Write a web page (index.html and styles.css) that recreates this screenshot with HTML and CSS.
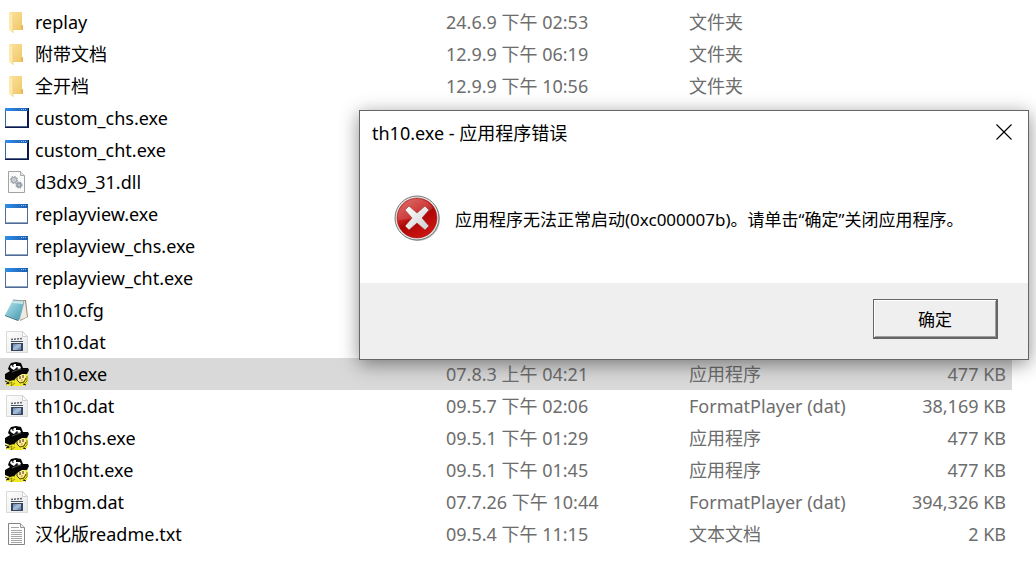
FILE: index.html
```
<!DOCTYPE html>
<html lang="zh-CN">
<head>
    <meta charset="UTF-8">
    <meta name="viewport" content="width=device-width, initial-scale=1.0">
    <title>th10</title>
    <link rel="stylesheet" href="styles.css">
</head>
<body>
    <svg class="sprite" aria-hidden="true">
        <defs>
            <linearGradient id="folderBack" x1="0" y1="0" x2="1" y2="1">
                <stop offset="0" stop-color="#fbe29c"/>
                <stop offset="1" stop-color="#efc566"/>
            </linearGradient>
            <linearGradient id="windowBar" x1="0" y1="0" x2="1" y2="0">
                <stop offset="0" stop-color="#2f8fe8"/>
                <stop offset="1" stop-color="#1b5cae"/>
            </linearGradient>
            <linearGradient id="notebook" x1="0" y1="0" x2="1" y2="1">
                <stop offset="0" stop-color="#b9e6ec"/>
                <stop offset="0.5" stop-color="#7cc0d0"/>
                <stop offset="1" stop-color="#3f93ad"/>
            </linearGradient>
            <linearGradient id="screen" x1="0" y1="0" x2="1" y2="1">
                <stop offset="0" stop-color="#6484ad"/>
                <stop offset="0.5" stop-color="#a9c3de"/>
                <stop offset="1" stop-color="#54749c"/>
            </linearGradient>
            <linearGradient id="paper" x1="0" y1="0" x2="1" y2="1">
                <stop offset="0" stop-color="#fdfdfd"/>
                <stop offset="1" stop-color="#e9e9ea"/>
            </linearGradient>
            <linearGradient id="errorRed" x1="0" y1="0" x2="0.6" y2="1">
                <stop offset="0" stop-color="#d8605c"/>
                <stop offset="0.45" stop-color="#c8201f"/>
                <stop offset="0.6" stop-color="#ad0505"/>
                <stop offset="1" stop-color="#cc1512"/>
            </linearGradient>
            <linearGradient id="errorCross" x1="0" y1="0" x2="1" y2="1">
                <stop offset="0" stop-color="#ffffff"/>
                <stop offset="1" stop-color="#cfcfcf"/>
            </linearGradient>
        </defs>
        <symbol id="icon-folder" viewBox="0 0 24 24">
            <path d="M5 2h12v13l1 1v4H6z" fill="url(#folderBack)"/>
            <path d="M16 15h2v5h-2z" fill="#e5b95c"/>
            <path d="M4 2l4 3v18l-4-3z" fill="#fde9ab"/>
            <path d="M8 5v18" stroke="#edca77" stroke-width="0.6"/>
        </symbol>
        <symbol id="icon-window-dark" viewBox="0 0 24 24">
            <path d="M0 2h24v20H0z" fill="#10184a"/>
            <path d="M0 2h1v19H0z" fill="#3c6494"/>
            <path d="M0 2h23v3H0z" fill="url(#windowBar)"/>
            <path d="M1 5h21v15H1z" fill="#fff"/>
            <path d="M16 3h1v1h-1zM18 3h1v1h-1zM20 3h1v1h-1z" fill="#8cc4f4"/>
            <path d="M1 20h21v1H1z" fill="#496596"/>
        </symbol>
        <symbol id="icon-window" viewBox="0 0 24 24">
            <path d="M0 2h23v20H0z" fill="#536b94"/>
            <path d="M0 2h23v4H0z" fill="url(#windowBar)"/>
            <path d="M1 6h21v14H1z" fill="#fff"/>
            <path d="M16 3h1v1h-1zM18 3h1v1h-1zM20 3h1v1h-1z" fill="#8cc4f4"/>
            <path d="M1 20h21v1H1z" fill="#8ea6c4"/>
        </symbol>
        <symbol id="icon-dll" viewBox="0 0 24 24">
            <path d="M3.500 1.500h12l4 4v17h-16z" fill="#fafafa" stroke="#a2a2a2"/>
            <path d="M15.500 1.500v4h4" fill="#e8e8e8" stroke="#a8a8a8"/>
            <circle cx="9" cy="10" r="2.500" fill="#eef0f3" stroke="#a4a9b0" stroke-width="1.500"/>
            <circle cx="9" cy="10" r="3.500" fill="none" stroke="#a4a9b0" stroke-width="1.200" stroke-dasharray="1.500 1.200"/>
            <circle cx="9" cy="10" r="0.800" fill="#8b929b"/>
            <circle cx="14" cy="15" r="2" fill="#eef0f3" stroke="#949aa3" stroke-width="1.500"/>
            <circle cx="14" cy="15" r="3" fill="none" stroke="#949aa3" stroke-width="1.200" stroke-dasharray="1.400 1"/>
            <circle cx="14" cy="15" r="0.800" fill="#7b828b"/>
        </symbol>
        <symbol id="icon-cfg" viewBox="0 0 24 24">
            <path d="M18 2l3 0 2 17-8 4z" fill="#9c8a72"/>
            <path d="M18 3h2l2 16-7 3z" fill="#eceae4"/>
            <path d="M8 2l11 1-5 19-14-5z" fill="url(#notebook)"/>
            <path d="M8 2l11 1-1 3-11-1z" fill="#c7e6e9"/>
            <path d="M0 17l14 5-1 1-13-5z" fill="#3b7485"/>
            <path d="M8 2l11 1" stroke="#8a9c9e"/>
            <path d="M14 22l5-18" stroke="#5ba0b2" stroke-width="0.700"/>
        </symbol>
        <symbol id="icon-dat" viewBox="0 0 24 24">
            <path d="M1.500 1.500h16l5 5v16h-21z" fill="url(#paper)" stroke="#dadada"/>
            <path d="M17.500 1.500v5h5z" fill="#fff" stroke="#cfcfcf"/>
            <path d="M6 9.500l12-1" stroke="#5d6670" stroke-width="1.500" stroke-dasharray="2 1"/>
            <path d="M6 11h12v1H6z" fill="#4b535e"/>
            <path d="M6 13h12v8H6z" fill="#39475c"/>
            <path d="M8 14h8v6H8z" fill="url(#screen)"/>
        </symbol>
        <symbol id="icon-marisa" viewBox="0 0 24 24">
            <path d="M3 16l5-3 14-3 1 7-1 5-5 2H6l-5-1z" fill="#f0ea26"/>
            <path d="M5 18l-2 4 4-2-1 4 4-3M10 16l-1 3M22 14v5l-3 3" fill="none" stroke="#7a6c10" stroke-width="0.800"/>
            <path d="M14 12l5-1 2 4-2 4-4 1-3-3z" fill="#fff0a0"/>
            <path d="M12 14v4l3 3 4-1 2-4" fill="none" stroke="#4d4208"/>
            <path d="M15 14v3M18 13v3" stroke="#382a08"/>
            <path d="M15 18l3-1-1 2z" fill="#e08a48"/>
            <path d="M4 4l2-3 5-1 5 1 2 5 5 0 1 2-2 4-5 0-5 3-3 3-4 1-5-2v-5l5-3-2-2z" fill="#050505"/>
            <path d="M5 5l1-2 2 1 1-2h2v2l4 0 1 2-2 1-3-1-2 2-2-1-1-1z" fill="#fff"/>
            <path d="M8 4v1M11 6h2" stroke="#050505"/>
            <path d="M7 10l5-2 4-1" fill="none" stroke="#8c8c8c" stroke-width="0.600"/>
            <path d="M0 19l4 2M1 22l3-1M18 22l3 1" stroke="#151305" fill="none"/>
        </symbol>
        <symbol id="icon-txt" viewBox="0 0 24 24">
            <path d="M3.500 1.500h12l4 4v17h-16z" fill="#fdfdfd" stroke="#848484"/>
            <path d="M15.500 1.500v4h4" fill="#eee" stroke="#969696"/>
            <path d="M6 5.500h8M6 8.500h11M6 10.500h11M6 12.500h11M6 14.500h11M6 16.500h11M6 18.500h11M6 20.500h11" stroke="#a4a4a4"/>
        </symbol>
    </svg>

    <table class="files">
        <colgroup>
            <col class="col-name">
            <col class="col-date">
            <col class="col-type">
            <col class="col-size">
        </colgroup>
        <tbody>
            <tr>
                <td><div class="name"><svg class="icon"><use href="#icon-folder"/></svg>replay</div></td>
                <td>24.6.9 下午 02:53</td>
                <td>文件夹</td>
                <td></td>
            </tr>
            <tr>
                <td><div class="name"><svg class="icon"><use href="#icon-folder"/></svg>附带文档</div></td>
                <td>12.9.9 下午 06:19</td>
                <td>文件夹</td>
                <td></td>
            </tr>
            <tr>
                <td><div class="name"><svg class="icon"><use href="#icon-folder"/></svg>全开档</div></td>
                <td>12.9.9 下午 10:56</td>
                <td>文件夹</td>
                <td></td>
            </tr>
            <tr>
                <td><div class="name"><svg class="icon"><use href="#icon-window-dark"/></svg>custom_chs.exe</div></td>
                <td></td>
                <td></td>
                <td></td>
            </tr>
            <tr>
                <td><div class="name"><svg class="icon"><use href="#icon-window-dark"/></svg>custom_cht.exe</div></td>
                <td></td>
                <td></td>
                <td></td>
            </tr>
            <tr>
                <td><div class="name"><svg class="icon"><use href="#icon-dll"/></svg>d3dx9_31.dll</div></td>
                <td></td>
                <td></td>
                <td></td>
            </tr>
            <tr>
                <td><div class="name"><svg class="icon"><use href="#icon-window"/></svg>replayview.exe</div></td>
                <td></td>
                <td></td>
                <td></td>
            </tr>
            <tr>
                <td><div class="name"><svg class="icon"><use href="#icon-window"/></svg>replayview_chs.exe</div></td>
                <td></td>
                <td></td>
                <td></td>
            </tr>
            <tr>
                <td><div class="name"><svg class="icon"><use href="#icon-window"/></svg>replayview_cht.exe</div></td>
                <td></td>
                <td></td>
                <td></td>
            </tr>
            <tr>
                <td><div class="name"><svg class="icon"><use href="#icon-cfg"/></svg>th10.cfg</div></td>
                <td></td>
                <td></td>
                <td></td>
            </tr>
            <tr>
                <td><div class="name"><svg class="icon"><use href="#icon-dat"/></svg>th10.dat</div></td>
                <td></td>
                <td></td>
                <td></td>
            </tr>
            <tr class="selected">
                <td><div class="name"><svg class="icon"><use href="#icon-marisa"/></svg>th10.exe</div></td>
                <td>07.8.3 上午 04:21</td>
                <td>应用程序</td>
                <td>477 KB</td>
            </tr>
            <tr>
                <td><div class="name"><svg class="icon"><use href="#icon-dat"/></svg>th10c.dat</div></td>
                <td>09.5.7 下午 02:06</td>
                <td>FormatPlayer (dat)</td>
                <td>38,169 KB</td>
            </tr>
            <tr>
                <td><div class="name"><svg class="icon"><use href="#icon-marisa"/></svg>th10chs.exe</div></td>
                <td>09.5.1 下午 01:29</td>
                <td>应用程序</td>
                <td>477 KB</td>
            </tr>
            <tr>
                <td><div class="name"><svg class="icon"><use href="#icon-marisa"/></svg>th10cht.exe</div></td>
                <td>09.5.1 下午 01:45</td>
                <td>应用程序</td>
                <td>477 KB</td>
            </tr>
            <tr>
                <td><div class="name"><svg class="icon"><use href="#icon-dat"/></svg>thbgm.dat</div></td>
                <td>07.7.26 下午 10:44</td>
                <td>FormatPlayer (dat)</td>
                <td>394,326 KB</td>
            </tr>
            <tr>
                <td><div class="name"><svg class="icon"><use href="#icon-txt"/></svg>汉化版readme.txt</div></td>
                <td>09.5.4 下午 11:15</td>
                <td>文本文档</td>
                <td>2 KB</td>
            </tr>
        </tbody>
    </table>

    <div class="dialog" role="alertdialog" aria-labelledby="dialogTitle" aria-describedby="dialogText">
        <div class="dialog-title">
            <span id="dialogTitle">th10.exe - 应用程序错误</span>
            <button type="button" class="close" aria-label="关闭">
                <svg width="16" height="16" viewBox="0 0 16 16"><path d="M0.500 0.500l15 15M15.500 0.500l-15 15" stroke="#000" stroke-width="1.200"/></svg>
            </button>
        </div>
        <div class="dialog-body">
            <svg class="error-icon" viewBox="0 0 48 48" aria-hidden="true">
                <circle cx="25" cy="25" r="22" fill="#000" opacity="0.25"/>
                <circle cx="24" cy="24" r="22" fill="#e6e6e6" stroke="#777" stroke-width="1"/>
                <circle cx="24" cy="24" r="20" fill="url(#errorRed)" stroke="#9b1a18" stroke-width="0.500"/>
                <path d="M5 26a19 19 0 0 1 35-12C32 22 20 26 5 26z" fill="#fff" opacity="0.140"/>
                <path d="M16 12l8 7 8-7 4 4-7 8 7 8-4 4-8-7-8 7-4-4 7-8-7-8z" fill="url(#errorCross)" stroke="#8e1c1a" stroke-width="0.500" stroke-linejoin="round"/>
            </svg>
            <p id="dialogText">应用程序无法正常启动(0xc000007b)。请单击<span class="quote">“</span>确定<span class="quote">”</span>关闭应用程序。</p>
        </div>
        <div class="dialog-footer">
            <button type="button" class="ok">确定</button>
        </div>
    </div>
</body>
</html>
```

FILE: styles.css
```
body {
    position: relative;
    margin: 0;
    padding: 6px 24px 0 0;
    background-color: #fff;
    color: #000;
    font-family: "Noto Sans", "Noto Sans CJK SC", sans-serif;
    font-size: 18px;
}
.sprite {
    position: absolute;
    width: 0;
    height: 0;
}
.files {
    width: 100%;
    table-layout: fixed;
    border-collapse: collapse;
}
.col-name {
    width: 446px;
}
.col-date {
    width: 243px;
}
.col-type {
    width: 180px;
}
.files td {
    height: 32px;
    padding: 0;
    line-height: 32px;
    color: #6d6d6d;
    white-space: nowrap;
}
.files td:first-child {
    padding-left: 5px;
    color: #000;
}
.files td:last-child {
    padding-right: 6px;
    text-align: right;
}
.name {
    display: flex;
    align-items: center;
    gap: 6px;
    height: 32px;
}
.icon {
    width: 24px;
    height: 24px;
}
.selected {
    background-color: #d9d9d9;
}

.dialog {
    position: absolute;
    top: 110px;
    left: 359px;
    right: 7px;
    border: 1px solid #666;
    background-color: #fff;
    box-shadow: 0 4px 18px rgba(0, 0, 0, 0.45);
}
.dialog-title {
    display: flex;
    justify-content: space-between;
    align-items: center;
    height: 42px;
    padding-left: 12px;
}
.close {
    display: flex;
    align-items: center;
    justify-content: center;
    width: 48px;
    height: 42px;
    padding: 0;
    border: none;
    background: none;
}
.dialog-body {
    display: flex;
    align-items: center;
    gap: 14px;
    padding: 41px 33px;
    font-size: 17px;
}
.dialog-body p {
    margin: 0;
}
.error-icon {
    width: 48px;
    height: 48px;
}
.quote {
    font-family: "Open Sans", sans-serif;
}
.dialog-footer {
    display: flex;
    justify-content: flex-end;
    padding: 16px 30px 20px;
    background-color: #efefef;
}
.ok {
    width: 125px;
    height: 40px;
    padding: 0;
    border: 1px solid #666;
    border-right-width: 2px;
    border-bottom-width: 2px;
    background-color: #efefef;
    box-shadow: inset 1px 1px #fff, inset -1px -1px #a0a0a0;
    color: #000;
    font-family: inherit;
    font-size: 17px;
}
```
